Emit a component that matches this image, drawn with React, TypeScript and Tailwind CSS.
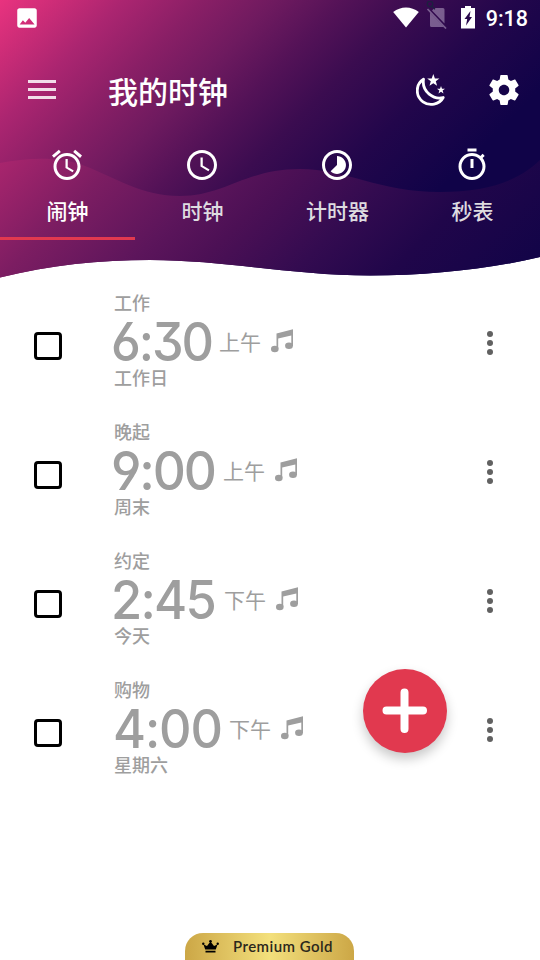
import React from "react";

type Alarm = {
  label: string;
  time: string;
  period: string;
  repeat: string;
  timeClass: string;
  digitsClass: string;
};

const alarms: Alarm[] = [
  { label: "工作", time: "6:30", period: "上午", repeat: "工作日", timeClass: "w-[105px]", digitsClass: "-ml-[3px] scale-x-[0.95] tracking-[-2.2px]" },
  { label: "晚起", time: "9:00", period: "上午", repeat: "周末", timeClass: "w-[109px]", digitsClass: "-ml-[3px] scale-x-[0.97] tracking-[-2.2px]" },
  { label: "约定", time: "2:45", period: "下午", repeat: "今天", timeClass: "w-[110px]", digitsClass: "-ml-[3px] scale-x-[0.955] tracking-[-1.8px]" },
  { label: "购物", time: "4:00", period: "下午", repeat: "星期六", timeClass: "w-[115px]", digitsClass: "-ml-px scale-x-[0.95] tracking-[-1.2px]" },
];

const cjk = "font-['Noto_Sans_CJK_SC',sans-serif]";

function HeaderBackdrop() {
  return (
    <svg className="absolute inset-0 h-[280px] w-[540px]" viewBox="0 0 540 280" aria-hidden="true">
      <defs>
        <linearGradient id="sky" gradientUnits="userSpaceOnUse" x1="0" y1="0" x2="315" y2="315">
          <stop offset="0" stopColor="#e9337f" />
          <stop offset="0.08" stopColor="#d02d78" />
          <stop offset="0.2" stopColor="#aa2570" />
          <stop offset="0.32" stopColor="#8a1f66" />
          <stop offset="0.44" stopColor="#6e1a5f" />
          <stop offset="0.55" stopColor="#531257" />
          <stop offset="0.66" stopColor="#3b0c50" />
          <stop offset="0.82" stopColor="#22064b" />
          <stop offset="1" stopColor="#100348" />
        </linearGradient>
        <linearGradient id="hill" gradientUnits="userSpaceOnUse" x1="75" y1="75" x2="395" y2="395">
          <stop offset="0.02" stopColor="#a8256d" />
          <stop offset="0.2" stopColor="#7c1d62" />
          <stop offset="0.38" stopColor="#5c155b" />
          <stop offset="0.49" stopColor="#4c1055" />
          <stop offset="0.65" stopColor="#330b50" />
          <stop offset="0.8" stopColor="#20064a" />
          <stop offset="1" stopColor="#130448" />
        </linearGradient>
      </defs>
      <path fill="url(#sky)" d="M0 0H540V257C490 269 430 275.5 370 275.5C290 275.5 225 260 150 260C100 260 50 265 0 277.5Z" />
      <path fill="url(#hill)" d="M0 163C28 158 58 156 85 166C116 178 142 196 180 196C225 196 245 169 300 169C345 169 380 192 440 192C488 192 518 181 540 160V257C490 269 430 275.5 370 275.5C290 275.5 225 260 150 260C100 260 50 265 0 277.5Z" />
    </svg>
  );
}

function StatusBar() {
  return (
    <div className="flex h-9 items-center text-white">
      <svg className="ml-[14px] size-[26px]" viewBox="0 0 24 24" fill="currentColor">
        <path d="M21 19V5c0-1.1-.9-2-2-2H5c-1.1 0-2 .9-2 2v14c0 1.1.9 2 2 2h14c1.1 0 2-.9 2-2zM5.2 18l3-4 2.2 2.4 3.6-4.4 5 6z" />
      </svg>
      <svg className="mb-0.5 ml-auto h-[21px] w-[26px]" viewBox="0 0 26 21" fill="currentColor">
        <path d="M.2 5Q6 .4 13 .4T25.800 5L13 20.600Z" />
      </svg>
      <svg className="mb-1.5 ml-[7px] h-7 w-[22px]" viewBox="0 -5 22 28">
        <g opacity="0.4" fill="#e6dcf2">
          <path d="M8.500 2H17Q18.500 2 18.500 3.500V17.500L6 4.500ZM4 6.500L18 21H5.500Q4 21 4 19.500Z" />
          <path d="M1.500 3L20 22.500" stroke="#e6dcf2" strokeWidth="1.700" />
        </g>
        <path d="M6.300 .4L9 3.200M6.800 -2A2.800 2.800 0 1 1 1.200 -2A2.800 2.800 0 1 1 6.800 -2" fill="none" stroke="#1d2140" strokeWidth="1.300" />
      </svg>
      <svg className="mb-0.5 ml-3 h-[23px] w-4" viewBox="0 0 16 23" fill="currentColor">
        <path fillRule="evenodd" d="M5 0H11V2H15V22.500H1V2H5ZM10.500 5L4.500 13H7.200L6 19.500L12 11H9.500Z" />
      </svg>
      <span className="mr-3 ml-[10px] pt-px font-[Roboto,sans-serif] text-[21.5px] leading-none font-medium">9:18</span>
    </div>
  );
}

function Toolbar() {
  return (
    <div className="flex h-[108px] items-center text-white">
      <button className="mb-px ml-7 flex w-7 flex-col gap-[5px]" aria-label="菜单">
        <span className="h-[3px] w-full bg-white/85" />
        <span className="h-[3px] w-full bg-white/85" />
        <span className="h-[3px] w-full bg-white/85" />
      </button>
      <h1 className={`mb-px ml-[52px] text-[30px] leading-[44px] font-medium ${cjk}`}>我的时钟</h1>
      <button className="ml-auto" aria-label="夜间模式">
        <svg className="h-8 w-[30px]" viewBox="0 0 30 32">
          <path d="M7.500 5.200C-1 10.500-.5 22.500 7 27.800C13.500 32.500 23.500 30.600 27.200 23.500C18 26 5.500 18 7.500 5.200Z" fill="none" stroke="white" strokeWidth="2.800" strokeLinejoin="round" />
          <path fill="white" d="M17.300 0L18.900 4.400L23.400 4.500L19.800 7.300L21.100 11.800L17.300 9.200L13.500 11.800L14.800 7.300L11.200 4.500L15.700 4.400ZM25 12L26 14.700L29 14.800L26.600 16.600L27.500 19.500L25 17.800L22.500 19.500L23.400 16.600L21 14.800L24 14.700Z" />
        </svg>
      </button>
      <button className="mr-[18px] ml-[40px]" aria-label="设置">
        <svg className="size-9" viewBox="0 0 24 24" fill="currentColor">
          <path d="M19.430 12.980c.04-.32.07-.64.07-.98s-.03-.66-.07-.98l2.110-1.650c.19-.15.24-.42.12-.64l-2-3.460c-.12-.22-.39-.3-.61-.22l-2.490 1c-.52-.4-1.080-.73-1.690-.98l-.38-2.650C14.460 2.180 14.250 2 14 2h-4c-.25 0-.46.18-.49.42l-.38 2.650c-.61.25-1.170.59-1.690.98l-2.490-1c-.23-.09-.49 0-.61.22l-2 3.460c-.13.22-.07.49.12.64l2.110 1.650c-.04.32-.07.65-.07.98s.03.66.07.98l-2.110 1.650c-.19.15-.24.42-.12.64l2 3.460c.12.22.39.3.61.22l2.490-1c.52.4 1.080.73 1.690.98l.38 2.650c.03.24.24.42.49.42h4c.25 0 .46-.18.49-.42l.38-2.650c.61-.25 1.170-.59 1.690-.98l2.490 1c.23.09.49 0 .61-.22l2-3.460c.12-.22.07-.49-.12-.64l-2.110-1.650zM12 15.500c-1.930 0-3.500-1.570-3.500-3.500s1.570-3.500 3.500-3.500 3.500 1.570 3.500 3.500-1.570 3.500-3.500 3.500z" />
        </svg>
      </button>
    </div>
  );
}

const tabs = [
  {
    name: "闹钟",
    icon: <path d="M22 5.720l-4.600-3.860-1.290 1.530 4.600 3.860L22 5.720zM7.880 3.390L6.600 1.860 2 5.710l1.290 1.530 4.590-3.850zM12.500 8H11v6l4.750 2.850.75-1.230-4-2.370V8zM12 4c-4.970 0-9 4.030-9 9s4.020 9 9 9c4.970 0 9-4.030 9-9s-4.030-9-9-9zm0 16c-3.870 0-7-3.130-7-7s3.130-7 7-7 7 3.130 7 7-3.130 7-7 7z" />,
  },
  {
    name: "时钟",
    icon: <path d="M11.990 2C6.470 2 2 6.480 2 12s4.470 10 9.990 10C17.520 22 22 17.520 22 12S17.520 2 11.990 2zM12 20c-4.420 0-8-3.580-8-8s3.580-8 8-8 8 3.580 8 8-3.580 8-8 8zm.5-13H11v6l5.250 3.150.75-1.230-4.500-2.670z" />,
  },
  {
    name: "计时器",
    icon: <path d="M16.240 7.760C15.070 6.590 13.540 6 12 6v6l-4.240 4.240c2.340 2.340 6.140 2.340 8.490 0 2.340-2.340 2.340-6.140-.01-8.480zM12 2C6.480 2 2 6.480 2 12s4.480 10 10 10 10-4.480 10-10S17.520 2 12 2zm0 18c-4.420 0-8-3.580-8-8s3.580-8 8-8 8 3.580 8 8-3.580 8-8 8z" />,
  },
  {
    name: "秒表",
    icon: <path d="M15 1H9v2h6V1zm-4 13h2V8h-2v6zm8.030-6.610l1.420-1.420c-.43-.51-.9-.99-1.410-1.410l-1.420 1.420C16.070 4.740 14.120 4 12 4c-4.970 0-9 4.030-9 9s4.020 9 9 9 9-4.030 9-9c0-2.120-.74-4.070-1.970-5.610zM12 20c-3.870 0-7-3.130-7-7s3.130-7 7-7 7 3.130 7 7-3.130 7-7 7z" />,
  },
];

function Tabs() {
  return (
    <nav className="grid h-24 grid-cols-4">
      {tabs.map((tab, i) => (
        <button
          key={tab.name}
          className={`flex flex-col items-center border-b-[3px] pt-[3px] ${i === 0 ? "border-[#e1394f] text-white" : "border-transparent text-[#dedce0]"}`}
        >
          <svg className="mr-px size-9 shrink-0" viewBox="0 0 24 24" fill="white">
            {tab.icon}
          </svg>
          <span className={`mt-3 text-[21px] leading-[30px] font-medium ${cjk}`}>{tab.name}</span>
        </button>
      ))}
    </nav>
  );
}

function MusicNote() {
  return (
    <svg className="h-6 w-[22px]" viewBox="0 0 22 24" fill="#9e9e9e">
      <path d="M5.500 4.500L22 .2V17H20.300V6.500L7.200 9.500V20H5.500Z" />
      <ellipse cx="3.800" cy="20" rx="3.800" ry="3.300" />
      <ellipse cx="18" cy="16.700" rx="3.900" ry="3.300" />
    </svg>
  );
}

function AlarmRow({ alarm }: { alarm: Alarm }) {
  return (
    <li className="flex h-[129px]">
      <div className="w-[114px] shrink-0 pt-[52px] pl-[34px]">
        <span className="block size-7 rounded-[4px] border-3 border-black" />
      </div>
      <div className={`flex-1 text-[#9e9e9e] ${cjk}`}>
        <div className="mt-[11px] text-[18px] leading-[22px] font-medium">{alarm.label}</div>
        <div className="mt-1 flex h-[50px] items-center">
          <div className={`shrink-0 ${alarm.timeClass}`}>
            <div className={`w-max origin-left font-[Inter,sans-serif] text-[53px] leading-[50px] font-medium whitespace-nowrap [font-feature-settings:'cv03','cv04','cv09'] ${alarm.digitsClass}`}>
              {alarm.time}
            </div>
          </div>
          <span className="mb-0.5 w-[52px] shrink-0 text-[21px] leading-[30px]">{alarm.period}</span>
          <div className="mb-0.5">
            <MusicNote />
          </div>
        </div>
        <div className="text-[18px] leading-5 font-medium">{alarm.repeat}</div>
      </div>
      <button className="mr-[47px] flex flex-col gap-[3px] self-start pt-[51px]" aria-label="更多">
        <span className="size-1.5 rounded-full bg-[#616161]" />
        <span className="size-1.5 rounded-full bg-[#616161]" />
        <span className="size-1.5 rounded-full bg-[#616161]" />
      </button>
    </li>
  );
}

export default function App() {
  return (
    <main className="relative flex h-[960px] w-[540px] flex-col overflow-hidden bg-white">
      <header className="relative h-[280px] shrink-0">
        <HeaderBackdrop />
        <div className="relative">
          <StatusBar />
          <Toolbar />
          <Tabs />
        </div>
      </header>
      <ul>
        {alarms.map((alarm) => (
          <AlarmRow key={alarm.label} alarm={alarm} />
        ))}
      </ul>
      <button
        className="absolute top-[669px] left-[363px] flex size-[84px] items-center justify-center rounded-full bg-[#e1394f] shadow-[0_6px_12px_rgba(0,0,0,0.22)]"
        aria-label="添加"
      >
        <svg className="size-[46px]" viewBox="0 0 46 46" stroke="white" strokeWidth="8" strokeLinecap="round">
          <path d="M4.500 22.500H41M22.500 4.500V41" />
        </svg>
      </button>
      <footer className="mt-auto ml-[185px] flex h-[27px] w-[169px] items-center rounded-t-[18px] bg-linear-to-r from-[#cca746] via-[#f3e07c] to-[#cca746]">
        <svg className="ml-[17px] h-[13px] w-[17px]" viewBox="0 0 17 13" fill="black">
          <path d="M3.200 9.500L1.500 4.500L5 6L8.500 1.500L12 6L15.500 4.500L13.800 9.500ZM3.500 10.700H13.500V12.500H3.500Z" />
          <circle cx="8.500" cy="1.300" r="1.300" />
          <circle cx="1.300" cy="3.800" r="1.200" />
          <circle cx="15.700" cy="3.800" r="1.200" />
        </svg>
        <span className="mb-0.5 ml-[14px] font-[Lato,sans-serif] text-[15px] leading-5 font-semibold tracking-[0.45px] whitespace-nowrap text-[#2b281c]">Premium Gold</span>
      </footer>
    </main>
  );
}
